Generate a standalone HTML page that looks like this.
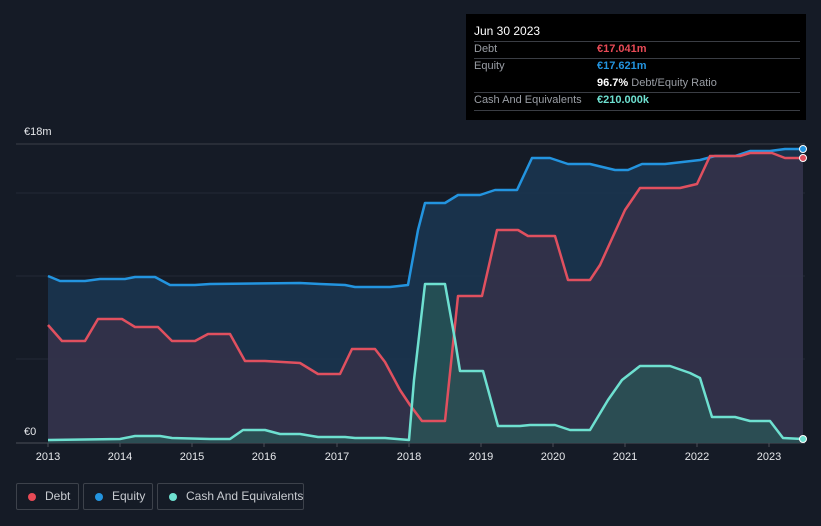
<!DOCTYPE html><html><head><style>
html,body{margin:0;width:821px;height:526px;overflow:hidden}
body{background:#151b26;font-family:"Liberation Sans",sans-serif;position:relative}
.tt{position:absolute;left:466px;top:14px;width:340px;height:106px;background:#000;color:#fff;font-size:11px;white-space:nowrap}
.tt .r{position:absolute;left:8px;right:6px;border-top:1px solid #3a3d44}
.lg{position:absolute;top:483px;height:27px;border:1px solid #3d424b;border-radius:2px;color:#c8cbd0;font-size:12px;line-height:27px;box-sizing:border-box;white-space:nowrap}
.lg i{position:absolute;left:11px;top:9px;width:8px;height:8px;border-radius:50%}
.lg span{position:absolute;left:28px;top:-1px}
</style></head><body>
<svg width="821" height="526" style="position:absolute;left:0;top:0">
<line x1="16" y1="144" x2="805" y2="144" stroke="#3a3f48"/>
<line x1="16" y1="193" x2="805" y2="193" stroke="#242a35"/>
<line x1="16" y1="276" x2="805" y2="276" stroke="#242a35"/>
<line x1="16" y1="359" x2="805" y2="359" stroke="#242a35"/>
<line x1="16" y1="443" x2="805" y2="443" stroke="#4a4f58"/>
<path d="M48,276 L60,281 L85,281 L100,279 L125,279 L135,277 L155,277 L170,285 L195,285 L210,284 L300,283 L320,284 L345,285 L355,287 L390,287 L408,285 L418,230 L425,203 L445,203 L458,195 L480,195 L495,190 L517,190 L532,158 L550,158 L568,164 L590,164 L615,170 L628,170 L642,164 L665,164 L700,160 L715,156 L735,156 L750,151 L770,151 L785,149 L803,149 L803,443 L48,443Z" fill="#1a3550" opacity="0.9"/>
<path d="M48,325 L62,341 L85,341 L98,319 L122,319 L135,327 L158,327 L172,341 L195,341 L208,334 L230,334 L245,361 L265,361 L300,363 L318,374 L340,374 L352,349 L375,349 L385,362 L400,390 L410,405 L422,421 L445,421 L458,296 L482,296 L497,230 L518,230 L528,236 L555,236 L568,280 L590,280 L600,265 L625,210 L640,188 L680,188 L697,184 L710,156 L740,156 L750,153 L772,153 L785,158 L803,158 L803,443 L48,443Z" fill="#3a3148" opacity="0.75"/>
<path d="M48,440 L120,439 L135,436 L160,436 L172,438 L210,439 L230,439 L243,430 L265,430 L280,434 L300,434 L318,437 L345,437 L355,438 L385,438 L409,440 L414,380 L425,284 L445,284 L455,340 L460,371 L483,371 L498,426 L520,426 L530,425 L555,425 L570,430 L590,430 L608,400 L622,380 L640,366 L670,366 L690,373 L700,378 L712,417 L735,417 L750,421 L770,421 L783,438 L803,439 L803,443 L48,443Z" fill="#2a5a58" opacity="0.7"/>
<g fill="none" stroke-width="2.5" stroke-linejoin="round">
<path stroke="#2394df" d="M48,276 L60,281 L85,281 L100,279 L125,279 L135,277 L155,277 L170,285 L195,285 L210,284 L300,283 L320,284 L345,285 L355,287 L390,287 L408,285 L418,230 L425,203 L445,203 L458,195 L480,195 L495,190 L517,190 L532,158 L550,158 L568,164 L590,164 L615,170 L628,170 L642,164 L665,164 L700,160 L715,156 L735,156 L750,151 L770,151 L785,149 L803,149"/>
<path stroke="#e0505f" d="M48,325 L62,341 L85,341 L98,319 L122,319 L135,327 L158,327 L172,341 L195,341 L208,334 L230,334 L245,361 L265,361 L300,363 L318,374 L340,374 L352,349 L375,349 L385,362 L400,390 L410,405 L422,421 L445,421 L458,296 L482,296 L497,230 L518,230 L528,236 L555,236 L568,280 L590,280 L600,265 L625,210 L640,188 L680,188 L697,184 L710,156 L740,156 L750,153 L772,153 L785,158 L803,158"/>
<path stroke="#6ee0d0" d="M48,440 L120,439 L135,436 L160,436 L172,438 L210,439 L230,439 L243,430 L265,430 L280,434 L300,434 L318,437 L345,437 L355,438 L385,438 L409,440 L414,380 L425,284 L445,284 L455,340 L460,371 L483,371 L498,426 L520,426 L530,425 L555,425 L570,430 L590,430 L608,400 L622,380 L640,366 L670,366 L690,373 L700,378 L712,417 L735,417 L750,421 L770,421 L783,438 L803,439"/>
</g>
<circle cx="803" cy="149" r="3.5" fill="#2394df" stroke="#fff" stroke-width="1"/>
<circle cx="803" cy="158" r="3.5" fill="#e0505f" stroke="#fff" stroke-width="1"/>
<circle cx="803" cy="439" r="3.5" fill="#6ee0d0" stroke="#fff" stroke-width="1"/>
<g stroke="#4a4f58"><line x1="48" y1="443" x2="48" y2="447"/><line x1="120" y1="443" x2="120" y2="447"/><line x1="192" y1="443" x2="192" y2="447"/><line x1="264" y1="443" x2="264" y2="447"/><line x1="337" y1="443" x2="337" y2="447"/><line x1="409" y1="443" x2="409" y2="447"/><line x1="481" y1="443" x2="481" y2="447"/><line x1="553" y1="443" x2="553" y2="447"/><line x1="625" y1="443" x2="625" y2="447"/><line x1="697" y1="443" x2="697" y2="447"/><line x1="769" y1="443" x2="769" y2="447"/></g>
<g fill="#e6e8eb" font-size="11" text-anchor="middle" font-family="Liberation Sans">
<text x="48" y="460">2013</text><text x="120" y="460">2014</text><text x="192" y="460">2015</text><text x="264" y="460">2016</text><text x="337" y="460">2017</text><text x="409" y="460">2018</text><text x="481" y="460">2019</text><text x="553" y="460">2020</text><text x="625" y="460">2021</text><text x="697" y="460">2022</text><text x="769" y="460">2023</text>
</g>
<text x="24" y="135" fill="#e6e8eb" font-size="11">€18m</text>
<text x="24" y="435" fill="#e6e8eb" font-size="11">€0</text>
</svg>
<div class="tt">
<div style="position:absolute;left:8px;top:10px;font-size:12px">Jun 30 2023</div>
<div class="r" style="top:27px"></div>
<div style="position:absolute;left:8px;top:29px;color:#9a9ea5">Debt</div>
<div style="position:absolute;left:131px;top:29px;color:#e84a56;font-weight:bold">€17.041m</div>
<div class="r" style="top:44px"></div>
<div style="position:absolute;left:8px;top:46px;color:#9a9ea5">Equity</div>
<div style="position:absolute;left:131px;top:46px;color:#2394df;font-weight:bold">€17.621m</div>
<div style="position:absolute;left:131px;top:63px"><b>96.7%</b> <span style="color:#9a9ea5">Debt/Equity Ratio</span></div>
<div class="r" style="top:78px"></div>
<div style="position:absolute;left:8px;top:80px;color:#9a9ea5">Cash And Equivalents</div>
<div style="position:absolute;left:131px;top:80px;color:#6ee0d0;font-weight:bold">€210.000k</div>
<div class="r" style="top:96px"></div>
</div>
<div class="lg" style="left:16px;width:63px"><i style="background:#e84a56"></i><span>Debt</span></div>
<div class="lg" style="left:83px;width:70px"><i style="background:#2394df"></i><span>Equity</span></div>
<div class="lg" style="left:157px;width:147px"><i style="background:#6ee0d0"></i><span>Cash And Equivalents</span></div>
</body></html>
